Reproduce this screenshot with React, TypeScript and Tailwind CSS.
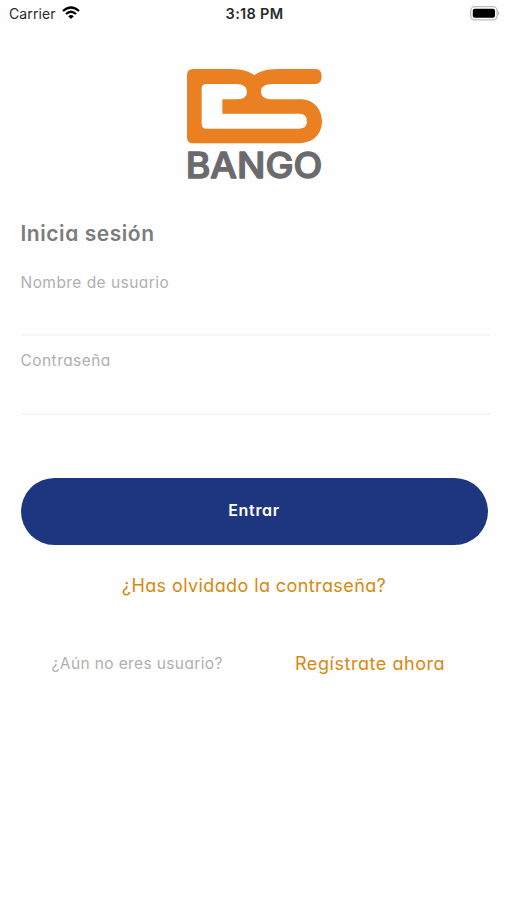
import type { ReactNode } from 'react'

function StatusBar() {
  return (
    <header className="grid h-[26px] grid-cols-3 items-center pl-[9px] pr-[7px] text-[14px] text-[#2a2a2a]">
      <div className="flex items-center gap-[6px]">
        <span className="w-[47px] whitespace-nowrap tracking-[0.1px]">Carrier</span>
        <svg viewBox="0 0 18 14" className="h-[14px] w-[18px]" aria-hidden="true">
          <g fill="none" stroke="#000" strokeWidth="2.3">
            <path d="M1 5Q9-2 17 5" />
            <path d="M4 8Q9 3.6 14 8" />
          </g>
          <path d="M6.2 10.2Q9 8 11.8 10.2L9 13Z" fill="#000" />
        </svg>
      </div>
      <span className="pt-[2px] text-center text-[14.5px] font-semibold tracking-[0.3px]">3:18 PM</span>
      <svg viewBox="0 0 30 15" className="h-[15px] w-[30px] justify-self-end" aria-hidden="true">
        <rect x="0.7" y="0.7" width="26.4" height="13.2" rx="4" fill="#fff" stroke="#bdbdbd" strokeWidth="1.3" />
        <rect x="2.8" y="2.8" width="22.2" height="9" rx="2" fill="#000" />
        <path d="M28.2 5q2 2.3 0 4.6z" fill="#aaa" />
      </svg>
    </header>
  )
}

function Logo() {
  return (
    <svg viewBox="0 0 468 390" className="h-[130px] w-[156px]" role="img" aria-label="BS Bango">
      <path
        fill="#eb8023"
        fillRule="evenodd"
        d="M52 27H165C200 27 223 36 235 46C248 36 270 27 305 27H418Q437 27 437 49Q437 72 418 72H292Q255 72 255 95Q255 118 292 118H372C415 118 438 150 438 184C438 222 412 250 366 250H51Q33 250 33 232V46Q33 27 52 27ZM91 72Q77 72 77 86V191Q77 206 92 206H370Q393 206 393 184Q393 161 370 161H139V118H180Q213 118 213 95Q213 72 180 72Z"
      />
      <text
        x="29"
        y="354"
        textLength="410"
        lengthAdjust="spacingAndGlyphs"
        strokeWidth="4"
        strokeLinejoin="round"
        className="fill-[#6b6b6e] stroke-[#6b6b6e] text-[106px] font-medium"
      >
        BANGO
      </text>
    </svg>
  )
}

function Field({ id, type, children }: { id: string; type: string; children: ReactNode }) {
  return (
    <div className="flex h-[78.5px] flex-col border-b-2 border-[#f7f7f7] pt-[13px]">
      <label htmlFor={id} className="h-6 text-[15.5px] leading-6 tracking-[0.45px] text-[#b0b0b0]">
        {children}
      </label>
      <input id={id} type={type} className="w-full flex-1 bg-transparent outline-none" />
    </div>
  )
}

export default function App() {
  return (
    <div className="min-h-[900px] bg-[#fefefe] font-['Inter','Liberation_Sans',sans-serif]">
      <StatusBar />
      <main className="flex flex-col pl-[20.5px] pr-[19.5px] pt-[34px] [font-feature-settings:'cv11']">
        <div className="flex justify-center">
          <Logo />
        </div>
        <h1 className="mt-[28px] h-8 text-[21px] font-semibold leading-8 tracking-[0.55px] text-[#7c7c7c]">
          Inicia sesión
        </h1>
        <form className="mt-[7.5px]">
          <div className="-mr-[2px]">
            <Field id="username" type="text">Nombre de usuario</Field>
            <Field id="password" type="password">Contraseña</Field>
          </div>
          <button
            type="button"
            className="mt-[63.5px] h-[66.5px] w-full rounded-full bg-[#1e367f] pb-[3px] text-[16px] font-semibold tracking-[0.7px] text-white"
          >
            Entrar
          </button>
        </form>
        <a href="#" className="mt-[27px] self-center text-[18px] leading-7 tracking-[0.4px] text-[#d6890f]">
          ¿Has olvidado la contraseña?
        </a>
        <div className="mt-[50.5px] flex items-center pl-[31px]">
          <span className="w-[243.5px] text-[15.5px] leading-7 tracking-[0.38px] text-[#b0b0b0]">
            ¿Aún no eres usuario?
          </span>
          <a href="#" className="text-[18px] leading-7 tracking-[0.55px] text-[#d6890f]">
            Regístrate ahora
          </a>
        </div>
      </main>
    </div>
  )
}
